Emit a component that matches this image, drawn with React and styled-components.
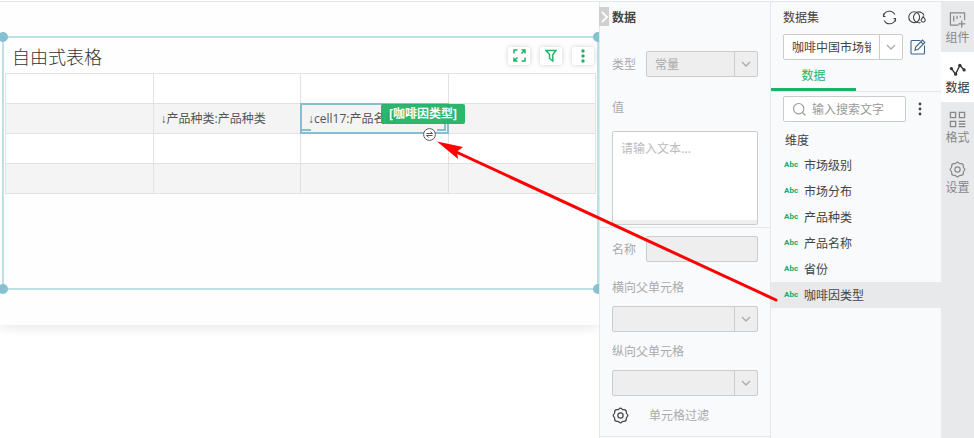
import React, { useState } from "react";
import styled, { createGlobalStyle } from "styled-components";

const GlobalStyle = createGlobalStyle`
  * {
    box-sizing: border-box;
  }

  body {
    margin: 0;
    background: #fff;
    color: #444;
    font-family: "Noto Sans CJK SC", sans-serif;
    font-size: 12px;
    line-height: 16px;
  }

  button, input, select, textarea {
    font: inherit;
    color: inherit;
    margin: 0;
    padding: 0;
    border: none;
    background: none;
    outline: none;
    border-radius: 0;
  }

  button {
    cursor: pointer;
  }

  svg {
    display: block;
    flex: none;
  }
`;

// Layout
const Page = styled.div`
  position: relative;
  display: grid;
  grid-template-columns: minmax(0, 1fr) 172px 170px 33px;
  min-height: 100vh;
  padding-top: 1px;
  overflow: hidden;
`;

const Canvas = styled.main`
  border-top: 1px solid #e3e7ee;
  overflow: hidden;
`;

const Report = styled.div`
  padding: 34px 0 35px 2px;
  background: #fefefe;
  box-shadow: 0 2px 12px rgba(0, 0, 0, 0.1);
`;

// Table widget
const Widget = styled.section`
  position: relative;
  min-height: 254px;
  border: 2px solid #bfdfe6;
  padding: 0 1px;
`;

const Handle = styled.span`
  position: absolute;
  ${(props) => props.$v}: -6px;
  ${(props) => props.$h}: -6px;
  width: 10px;
  height: 10px;
  border-radius: 50%;
  background: #86c1d2;
`;

const WidgetHeader = styled.header`
  display: flex;
  align-items: center;
  height: 35px;
  padding: 0 2px 0 7px;
`;

const WidgetTitle = styled.h2`
  flex: 1;
  margin: 0;
  font-size: 18px;
  font-weight: 300;
  color: #333;
`;

const ToolGroup = styled.div`
  display: flex;
  gap: 10px;
`;

const ToolButton = styled.button`
  display: flex;
  align-items: center;
  justify-content: center;
  width: 22px;
  height: 18px;
  border-radius: 3px;
  background: #fff;
  color: #1fb264;
  box-shadow: 0 0 5px rgba(0, 0, 0, 0.18);
`;

const FreeTable = styled.table`
  width: 100%;
  table-layout: fixed;
  border-collapse: collapse;
`;

const Row = styled.tr`
  height: 30px;
  background: ${(props) => (props.$striped ? "#f4f4f4" : "#fff")};
`;

const Cell = styled.td`
  position: relative;
  padding: 0 7px;
  border: 1px solid #e2e2e2;
  font-family: "Open Sans", "Liberation Sans", "Noto Sans CJK SC", sans-serif;
  white-space: nowrap;
  color: #555;
`;

const Selection = styled.div`
  position: absolute;
  inset: -1px;
  border: 2px solid #82bfd0;
`;

const Bracket = styled.span`
  position: absolute;
  bottom: 1px;
  ${(props) => (props.$side === "left" ? "left: 0;" : "right: 1px;")}
  width: 9px;
  height: ${(props) => (props.$side === "left" ? "2px" : "10px")};
  border-bottom: 2px solid #82bfd0;
  border-right: ${(props) => (props.$side === "left" ? "none" : "2px solid #82bfd0")};
`;

const DragTag = styled.span`
  position: absolute;
  left: 79px;
  top: -1px;
  z-index: 2;
  padding: 2px 8px;
  border-radius: 2px;
  background: rgba(31, 178, 100, 0.94);
  color: #fff;
  font-weight: 700;
`;

const SwapButton = styled.button`
  position: absolute;
  right: 11px;
  bottom: -9px;
  z-index: 2;
  width: 13px;
  height: 13px;
  color: #555;
`;

// Side panels
const Panel = styled.aside`
  position: relative;
  border-top: 1px solid #e3e7ee;
  border-left: 1px solid #e3e7ee;
  background: #f8fafc;
`;

const PropsPanel = styled(Panel)`
  border-right: 1px solid #e3e7ee;
`;

const DataPanel = styled(Panel)`
  border-left: none;
`;

const PanelHeader = styled.div`
  display: flex;
  align-items: center;
  gap: 11px;
  height: 30px;
  padding: 0 15px 0 12px;
`;

const PanelTitle = styled.h3`
  flex: 1;
  margin: 0;
  font-size: 12px;
  font-weight: ${(props) => (props.$bold ? 700 : 400)};
  color: #444;
`;

const CollapseButton = styled.button`
  position: absolute;
  left: -1px;
  top: 5px;
  display: flex;
  align-items: center;
  justify-content: center;
  width: 10px;
  height: 19px;
  background: #cfcfcf;
  color: #fff;
`;

const Section = styled.div`
  padding: ${(props) => props.$pad};
  border-bottom: 1px solid #e3e7ee;
`;

const FieldRow = styled.div`
  display: grid;
  grid-template-columns: 34px minmax(0, 1fr);
  align-items: center;
`;

const FieldLabel = styled.label`
  display: block;
  color: #aaa;
`;

const BlockLabel = styled(FieldLabel)`
  padding: ${(props) => props.$pad || "11px 0"};
`;

const SelectBox = styled.div`
  display: grid;
  grid-template-columns: minmax(0, 1fr) 23px;
  height: 26px;
  border: 1px solid #ccc;
  border-radius: 2px;
  background: ${(props) => (props.$disabled ? "#eee" : "#fff")};
`;

const NativeSelect = styled.select`
  grid-area: 1 / 1 / 2 / 3;
  appearance: none;
  width: 100%;
  padding: 0 31px 0 8px;
  color: #444;

  &:disabled {
    color: #aaa;
    opacity: 1;
  }
`;

const SelectArrow = styled.span`
  grid-area: 1 / 2 / 2 / 3;
  display: flex;
  align-items: center;
  justify-content: center;
  border-left: 1px solid #ccc;
  color: #aaa;
  pointer-events: none;
`;

const ValueArea = styled.textarea`
  display: block;
  width: 100%;
  height: 94px;
  padding: 8px;
  border: 1px solid #ccc;
  border-radius: 2px;
  background: #fff;
  box-shadow: inset 0 -4px #eee;
  resize: none;

  &::placeholder {
    color: #bbb;
  }
`;

const NameInput = styled.input`
  width: 100%;
  height: 26px;
  padding: 0 8px;
  border: 1px solid #ccc;
  border-radius: 2px;
  background: #eee;
`;

const FilterButton = styled.button`
  display: flex;
  align-items: center;
  gap: 20px;
  height: 22px;
  margin-top: 8px;
  color: #aaa;
`;

const IconButton = styled.button`
  display: flex;
  align-items: center;
  justify-content: center;
  color: ${(props) => props.$color || "#444"};
`;

const DatasetRow = styled.div`
  display: grid;
  grid-template-columns: minmax(0, 1fr) 18px;
  gap: 6px;
  padding: 2px 14px 0 12px;
`;

const Tabs = styled.div`
  display: flex;
  border-bottom: 1px solid #e3e7ee;
`;

const Tab = styled.button`
  width: 50%;
  height: 31px;
  padding-top: 2px;
  border-bottom: 3px solid #1fb264;
  color: #1fb264;
`;

const SearchRow = styled.div`
  display: grid;
  grid-template-columns: minmax(0, 1fr) 4px;
  gap: 12px;
  padding: 4px 19px 8px 12px;
`;

const SearchBox = styled.label`
  display: flex;
  align-items: center;
  gap: 5px;
  height: 26px;
  padding: 0 8px;
  border: 1px solid #ccc;
  border-radius: 2px;
  background: #fff;
  color: #999;
`;

const SearchInput = styled.input`
  width: 100%;
  min-width: 0;

  &::placeholder {
    color: #999;
  }
`;

const GroupTitle = styled.h4`
  margin: 0;
  padding: 2px 14px 4px;
  font-size: 12px;
  font-weight: 400;
`;

const FieldList = styled.ul`
  margin: 0;
  padding: 0;
  list-style: none;
`;

const FieldItem = styled.li`
  display: flex;
  align-items: center;
  gap: 5px;
  height: 26px;
  padding-left: 13px;
  cursor: grab;
  background: ${(props) => (props.$active ? "#e8e9eb" : "transparent")};
`;

const TypeBadge = styled.span`
  width: 15px;
  font-family: Roboto, sans-serif;
  font-size: 8px;
  font-weight: 700;
  line-height: 12px;
  color: #22a866;
`;

// Right rail
const Rail = styled.nav`
  border-top: 1px solid #e3e7ee;
  background: #e8e9eb;
`;

const RailItem = styled.button`
  display: flex;
  flex-direction: column;
  align-items: center;
  width: 100%;
  height: 50px;
  padding-top: 9px;
  line-height: 18px;
  background: ${(props) => (props.$active ? "#fff" : "transparent")};
  color: ${(props) => (props.$active ? "#333" : "#888")};
`;

const DragArrow = styled.svg`
  position: absolute;
  top: 138px;
  right: 194px;
  z-index: 3;
  pointer-events: none;
`;

// Icons
const Svg = ({ w = 16, h = w, sw = 1, box = w, children }) => (
  <svg width={w} height={h} viewBox={`0 0 ${box} ${(box * h) / w}`} fill="none" stroke="currentColor" strokeWidth={sw} aria-hidden="true">
    {children}
  </svg>
);

const ChevronIcon = () => (
  <Svg w={10} h={6} sw={1.3}>
    <path d="M1 1l4 4 4-4" />
  </Svg>
);

const GearIcon = () => (
  <Svg w={17} box={18} sw={1.3}>
    <path
      strokeLinejoin="round"
      d="M7.300 2.300Q9 .2 10.700 2.300Q11.600 3.100 12.700 2.800Q15.200 2.800 15.200 5.300Q14.900 6.400 15.700 7.300Q17.800 9 15.700 10.700Q14.900 11.600 15.200 12.700Q15.200 15.200 12.700 15.200Q11.600 14.900 10.700 15.700Q9 17.800 7.300 15.700Q6.400 14.900 5.300 15.200Q2.800 15.200 2.800 12.700Q3.100 11.600 2.300 10.700Q.2 9 2.300 7.300Q3.100 6.400 2.800 5.300Q2.800 2.800 5.300 2.800Q6.400 3.100 7.300 2.300z"
    />
    <circle cx="9" cy="9" r="2.8" />
  </Svg>
);

const ExpandIcon = () => (
  <Svg w={13} h={13} sw={1.5}>
    <path d="M1 4.500V1h3.500M12 8.500V12H8.500M8.500 1H12v3.500M12 1L8.500 4.500M4.500 12H1V8.500M1 12l3.500-3.500" />
  </Svg>
);

const FunnelIcon = () => (
  <Svg w={12} h={13} sw={1.4}>
    <path d="M1 1.500h10L7.800 5.500v6.500L4.500 9.500V5.500z" />
  </Svg>
);

const DotsIcon = ({ r = 1.7 }) => (
  <svg width="4" height="14" viewBox="0 0 4 14" fill="currentColor" aria-hidden="true">
    <circle cx="2" cy="2" r={r} />
    <circle cx="2" cy="7" r={r} />
    <circle cx="2" cy="12" r={r} />
  </svg>
);

const SwapIcon = () => (
  <Svg w={13} h={13}>
    <circle cx="6.5" cy="6.5" r="5.9" fill="#fff" />
    <path d="M3.500 5.500h6L7.500 3.700M9.500 7.500h-6l2 1.800" />
  </Svg>
);

const RefreshIcon = () => (
  <Svg w={15} h={15} sw={1.1}>
    <path d="M1.500 6.500A6 6 0 0 1 12.800 4.500M3.500 6.500H1.500V3.500M13.500 8.500A6 6 0 0 1 2.200 10.500M11.500 8.500h2v3" />
  </Svg>
);

const DatasetIcon = () => (
  <Svg w={18} h={13} sw={1.1}>
    <circle cx="6.2" cy="6.2" r="5.4" />
    <path d="M12.500 11.500A5.400 5.400 0 1 1 16 4.500" />
    <path d="M15.200 5.500l1.900 3a2 2 0 1 1-3.800 0z" />
  </Svg>
);

const EditIcon = () => (
  <Svg w={16} h={16} sw={1.1}>
    <path d="M10.500 1.500H2Q1 1.500 1 2.500V14Q1 15 2 15H13.500Q14.500 15 14.500 14V6.500M5 11.200l.7-3.200L12.500 1.100l2.300 2.300L8.200 10.300zM10.800 2.800l2.300 2.300" />
  </Svg>
);

const SearchIcon = () => (
  <Svg w={15} h={15} sw={1.1}>
    <circle cx="6.7" cy="6.7" r="5.2" />
    <path d="M10.500 10.500l3 3" />
  </Svg>
);

const WidgetIcon = () => (
  <Svg w={17} box={18} sw={1.3}>
    <path d="M10 15H1.500v-13h15V9.500M5 5v6M8.500 5v3.500M12 5v2M13.500 10v7.500M9.800 13.700h7.500" />
  </Svg>
);

const LineIcon = () => (
  <Svg w={17} box={18} sw={1.5}>
    <path d="M2.500 8l4.500 6 4.500-9.500 4.500 5" />
    <g fill="currentColor" stroke="none">
      <circle cx="2.5" cy="8" r="1.7" />
      <circle cx="7" cy="14" r="1.7" />
      <circle cx="11.5" cy="4.5" r="1.7" />
      <circle cx="16" cy="9.5" r="1.7" />
    </g>
  </Svg>
);

const FormatIcon = () => (
  <Svg w={17} box={18} sw={1.4}>
    <path d="M1.500 1.500h5.500v5.500H1.500zM11 1.500h5.500v5.500H11zM1.500 11h5.500v5.500H1.500zM10.300 11h7M10.300 13.800h7M10.300 16.600h7" />
  </Svg>
);

const rows = [
  ["", "", "", ""],
  ["", "↓产品种类:产品种类", "↓cell17:产品名称", ""],
  ["", "", "", ""],
  ["", "", "", ""],
];

const dimensions = ["市场级别", "市场分布", "产品种类", "产品名称", "省份", "咖啡因类型"];

const railItems = [
  { name: "组件", icon: <WidgetIcon /> },
  { name: "数据", icon: <LineIcon /> },
  { name: "格式", icon: <FormatIcon /> },
  { name: "设置", icon: <GearIcon /> },
];

const Select = ({ id, value, disabled, label }) => (
  <SelectBox $disabled={disabled}>
    <NativeSelect id={id} disabled={disabled} aria-label={label}>
      <option>{value}</option>
    </NativeSelect>
    <SelectArrow>
      <ChevronIcon />
    </SelectArrow>
  </SelectBox>
);

const App = () => {
  const [activeField, setActiveField] = useState("咖啡因类型");
  const [activeRail, setActiveRail] = useState("数据");

  return (
    <Page>
      <GlobalStyle />
      <Canvas>
        <Report>
          <Widget>
            <WidgetHeader>
              <WidgetTitle>自由式表格</WidgetTitle>
              <ToolGroup>
                <ToolButton aria-label="放大"><ExpandIcon /></ToolButton>
                <ToolButton aria-label="筛选"><FunnelIcon /></ToolButton>
                <ToolButton aria-label="更多"><DotsIcon /></ToolButton>
              </ToolGroup>
            </WidgetHeader>
            <FreeTable>
              <tbody>
                {rows.map((row, r) => (
                  <Row key={r} $striped={r % 2 === 1}>
                    {row.map((text, c) => (
                      <Cell key={c}>
                        {text}
                        {r === 1 && c === 2 && (
                          <Selection>
                            <Bracket $side="left" />
                            <Bracket $side="right" />
                            <DragTag>[咖啡因类型]</DragTag>
                            <SwapButton aria-label="切换"><SwapIcon /></SwapButton>
                          </Selection>
                        )}
                      </Cell>
                    ))}
                  </Row>
                ))}
              </tbody>
            </FreeTable>
            <Handle $v="top" $h="left" />
            <Handle $v="top" $h="right" />
            <Handle $v="bottom" $h="left" />
            <Handle $v="bottom" $h="right" />
          </Widget>
        </Report>
      </Canvas>

      <PropsPanel>
        <CollapseButton aria-label="收起">
          <Svg w={7} h={12} sw={1.8}>
            <path d="M1 1l5 5-5 5" />
          </Svg>
        </CollapseButton>
        <PanelHeader>
          <PanelTitle $bold>数据</PanelTitle>
        </PanelHeader>
        <Section $pad="19px 12px 2px">
          <FieldRow>
            <FieldLabel htmlFor="type">类型</FieldLabel>
            <Select id="type" value="常量" disabled />
          </FieldRow>
          <BlockLabel htmlFor="value" $pad="22px 0 16px">值</BlockLabel>
          <ValueArea id="value" placeholder="请输入文本..." />
        </Section>
        <Section $pad="8px 12px 10px">
          <FieldRow>
            <FieldLabel htmlFor="name">名称</FieldLabel>
            <NameInput id="name" disabled />
          </FieldRow>
          <BlockLabel htmlFor="row-parent" $pad="17px 0 11px">横向父单元格</BlockLabel>
          <Select id="row-parent" value="" disabled />
          <BlockLabel htmlFor="col-parent">纵向父单元格</BlockLabel>
          <Select id="col-parent" value="" disabled />
          <FilterButton>
            <IconButton as="span"><GearIcon /></IconButton>
            单元格过滤
          </FilterButton>
        </Section>
      </PropsPanel>

      <DataPanel>
        <PanelHeader>
          <PanelTitle>数据集</PanelTitle>
          <IconButton aria-label="刷新"><RefreshIcon /></IconButton>
          <IconButton aria-label="数据集设置"><DatasetIcon /></IconButton>
        </PanelHeader>
        <DatasetRow>
          <Select id="dataset" label="数据集" value="咖啡中国市场销售数据" />
          <IconButton aria-label="编辑" $color="#3f6488"><EditIcon /></IconButton>
        </DatasetRow>
        <Tabs>
          <Tab>数据</Tab>
        </Tabs>
        <SearchRow>
          <SearchBox>
            <SearchIcon />
            <SearchInput aria-label="搜索" placeholder="输入搜索文字" />
          </SearchBox>
          <IconButton aria-label="更多"><DotsIcon r={1.4} /></IconButton>
        </SearchRow>
        <GroupTitle>维度</GroupTitle>
        <FieldList>
          {dimensions.map((name) => (
            <FieldItem key={name} $active={name === activeField} onClick={() => setActiveField(name)}>
              <TypeBadge>Abc</TypeBadge>
              {name}
            </FieldItem>
          ))}
        </FieldList>
      </DataPanel>

      <Rail>
        {railItems.map((item) => (
          <RailItem key={item.name} $active={item.name === activeRail} onClick={() => setActiveRail(item.name)}>
            {item.icon}
            {item.name}
          </RailItem>
        ))}
      </Rail>

      <DragArrow width="344" height="166" viewBox="0 0 344 166" aria-hidden="true">
        <path d="M18 13L340 162" stroke="#f00" strokeWidth="3" strokeLinecap="round" />
        <path d="M1 3.500L27 9l-6 4.500 1 7.500z" fill="#f00" />
      </DragArrow>
    </Page>
  );
};

export default App;
